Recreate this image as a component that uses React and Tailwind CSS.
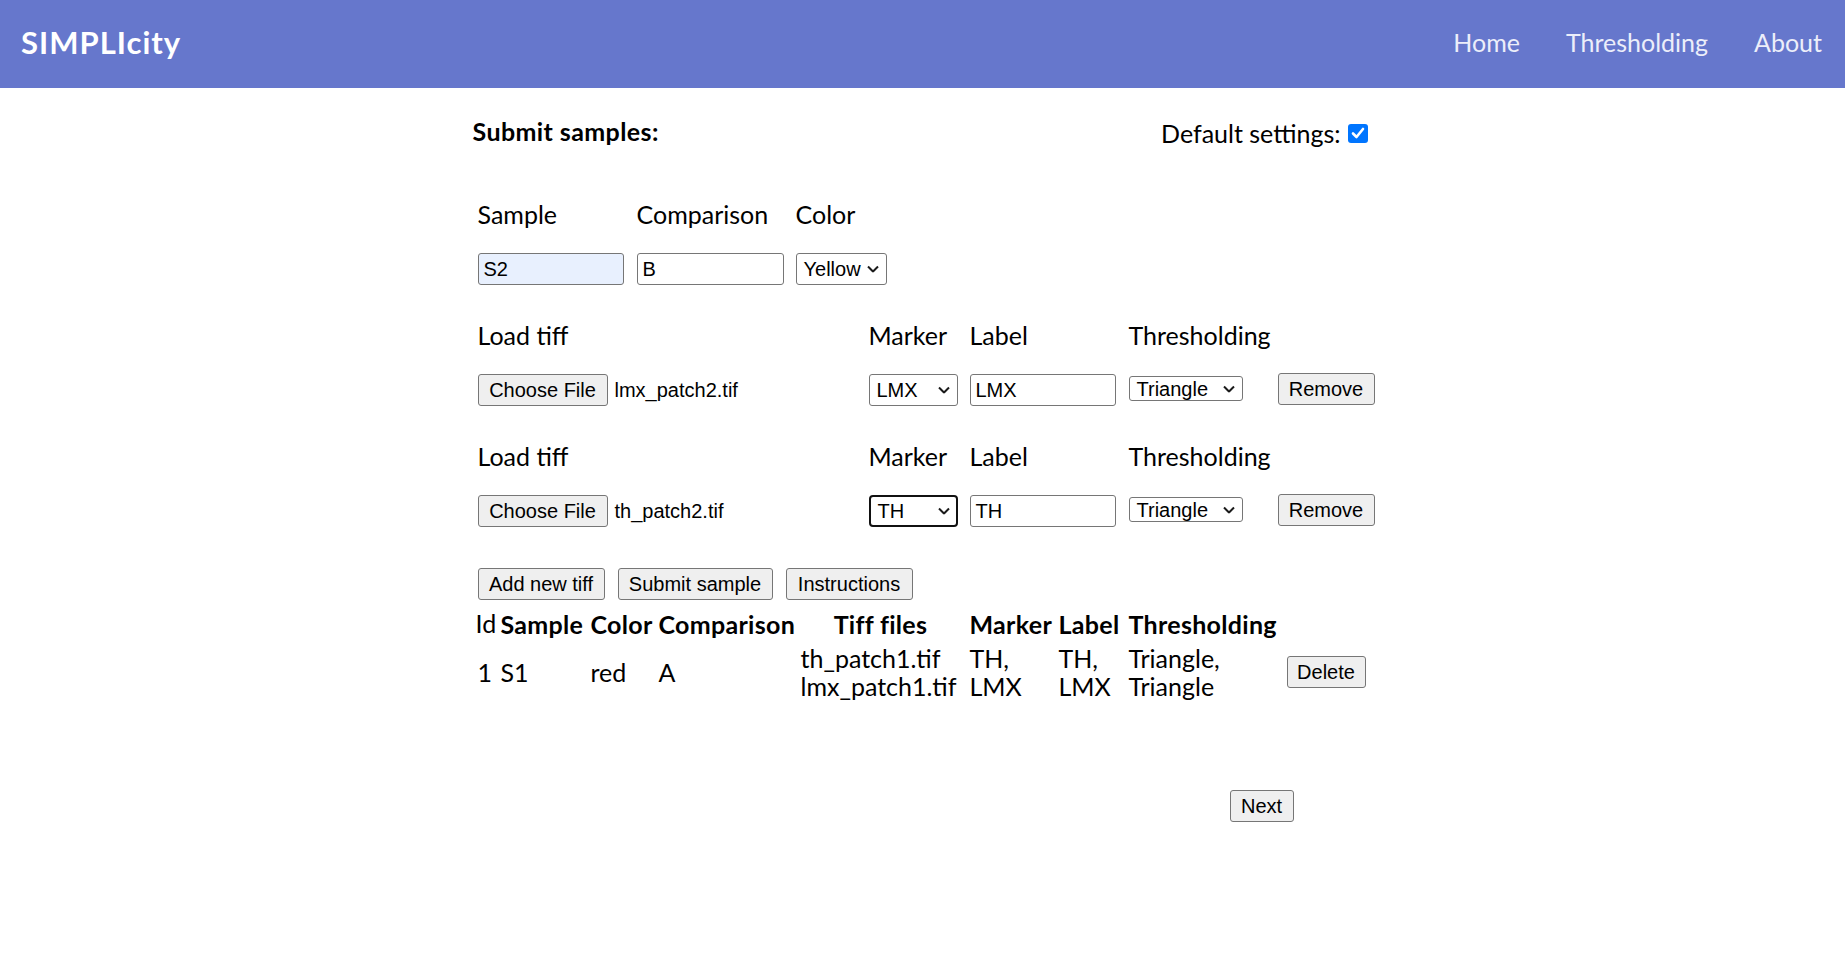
import React from "react";

const ctl = "font-['Liberation_Sans',Arial,sans-serif] text-[20px] text-black";

function Btn({ w, children, block }) {
  return (
    <button
      className={`${ctl} ${block ? "block" : ""} h-[32px] ${w} shrink-0 bg-[#efefef] border-[1.5px] border-[#767676] rounded-[3px] leading-none text-center`}
    >
      {children}
    </button>
  );
}

function Chevron() {
  return (
    <svg width="12" height="7" viewBox="0 0 12 7" className="absolute right-[8px] top-1/2 -translate-y-1/2 pointer-events-none">
      <polyline points="1,1 6,6 11,1" fill="none" stroke="#1a1a1a" strokeWidth="2" />
    </svg>
  );
}

function Select({ w, h = "h-[32px]", value, focused, extra = "" }) {
  return (
    <div className={`relative ${w} ${h} ${extra}`}>
      <div
        className={`${ctl} w-full h-full bg-white flex items-center pl-[7px] leading-none ${
          focused ? "border-[2.5px] border-[#111] rounded-[4px] pl-[6px]" : "border-[1.5px] border-[#767676] rounded-[3px]"
        }`}
      >
        {value}
      </div>
      <Chevron />
    </div>
  );
}

function TextInput({ w, value, bg = "bg-white" }) {
  return (
    <div
      className={`${ctl} ${w} h-[32px] ${bg} border-[1.5px] border-[#767676] rounded-[3px] flex items-center pl-[5px] leading-none`}
    >
      {value}
    </div>
  );
}

const lbl = "text-[25px] leading-[28px]";

function TiffRow({ file, marker, label, focused }) {
  return (
    <div className="grid grid-cols-[391px_101px_159px_149px_97px] gap-y-[25px] items-start pl-[5px] mt-[36px]">
      <div className={lbl}>Load tiff</div>
      <div className={lbl}>Marker</div>
      <div className={lbl}>Label</div>
      <div className={lbl}>Thresholding</div>
      <div />
      <div className="flex items-center h-[32px]">
        <Btn w="w-[130px]">Choose File</Btn>
        <span className={`${ctl} ml-[7px]`}>{file}</span>
      </div>
      <Select w="w-[89px]" value={marker} focused={focused} />
      <TextInput w="w-[146px]" value={label} />
      <Select w="w-[114px]" h="h-[25px]" value="Triangle" extra="mt-[2px]" />
      <div className="-mt-[1px]">
        <Btn w="w-[97px]" block>Remove</Btn>
      </div>
    </div>
  );
}

export default function App() {
  return (
    <div className="min-h-[978px] bg-white text-black font-['Lato',sans-serif]">
      <header className="h-[88px] bg-[#6677cc] flex justify-between items-start pl-[21px] pr-[23px]">
        <div className="mt-[24px] text-[31px] leading-[36px] font-bold tracking-[1px] text-white">SIMPLIcity</div>
        <nav className="mt-[28px] flex gap-[46px] text-[25px] leading-[28px] text-[#eceefa]">
          <span>Home</span>
          <span>Thresholding</span>
          <span>About</span>
        </nav>
      </header>

      <main className="w-[900px] mx-auto pt-[29px]">
        <div className="flex justify-between items-start">
          <div className="text-[25px] leading-[28px] font-bold tracking-[0.4px]">Submit samples:</div>
          <div className="flex items-center mt-[2px] mr-[5px]">
            <span className={lbl}>Default settings:</span>
            <div className="ml-[7px] w-[20px] h-[19px] rounded-[3px] bg-[#0075ff] flex items-center justify-center">
              <svg width="14" height="12" viewBox="0 0 14 12">
                <polyline points="2,6.5 5.5,10 12,2" fill="none" stroke="white" strokeWidth="2.6" strokeLinecap="round" strokeLinejoin="round" />
              </svg>
            </div>
          </div>
        </div>

        <div className="grid grid-cols-[159px_159px_91px] gap-y-[25px] items-start pl-[5px] mt-[53px]">
          <div className={lbl}>Sample</div>
          <div className={lbl}>Comparison</div>
          <div className={lbl}>Color</div>
          <TextInput w="w-[146px]" value="S2" bg="bg-[#e8f0fe]" />
          <TextInput w="w-[147px]" value="B" />
          <Select w="w-[91px]" value="Yellow" />
        </div>

        <TiffRow file="lmx_patch2.tif" marker="LMX" label="LMX" />
        <TiffRow file="th_patch2.tif" marker="TH" label="TH" focused />

        <div className="flex gap-[13px] pl-[5px] mt-[41px]">
          <Btn w="w-[127px]">Add new tiff</Btn>
          <Btn w="w-[155px]">Submit sample</Btn>
          <Btn w="w-[127px]">Instructions</Btn>
        </div>

        <table className="table-fixed border-collapse w-[893px] ml-[3px] mt-[10px] text-[25px]">
          <colgroup>
            <col className="w-[25px]" />
            <col className="w-[90px]" />
            <col className="w-[68px]" />
            <col className="w-[142px]" />
            <col className="w-[169px]" />
            <col className="w-[89px]" />
            <col className="w-[70px]" />
            <col className="w-[158px]" />
            <col className="w-[82px]" />
          </colgroup>
          <thead>
            <tr className="leading-[28px] align-top">
              <th className="p-0 text-left font-normal -translate-y-[1px]">Id</th>
              <th className="p-0 text-left font-bold tracking-[0.3px]">Sample</th>
              <th className="p-0 text-left font-bold tracking-[0.3px]">Color</th>
              <th className="p-0 text-left font-bold tracking-[0.3px]">Comparison</th>
              <th className="p-0 text-left font-bold tracking-[0.3px]">
                <div className="w-[160px] text-center">Tiff files</div>
              </th>
              <th className="p-0 text-left font-bold tracking-[0.3px]">Marker</th>
              <th className="p-0 text-left font-bold tracking-[0.3px]">Label</th>
              <th className="p-0 text-left font-bold tracking-[0.3px] whitespace-nowrap">Thresholding</th>
              <th className="p-0" />
            </tr>
          </thead>
          <tbody>
            <tr className="align-top">
              <td className="p-0 pt-[20px] leading-[28px] pl-[2px]">1</td>
              <td className="p-0 pt-[20px] leading-[28px]">S1</td>
              <td className="p-0 pt-[20px] leading-[28px]">red</td>
              <td className="p-0 pt-[20px] leading-[28px]">A</td>
              <td className="p-0 pt-[6px] leading-[28px] whitespace-nowrap">
                th_patch1.tif
                <br />
                lmx_patch1.tif
              </td>
              <td className="p-0 pt-[6px] leading-[28px]">
                TH,
                <br />
                LMX
              </td>
              <td className="p-0 pt-[6px] leading-[28px]">
                TH,
                <br />
                LMX
              </td>
              <td className="p-0 pt-[6px] leading-[28px]">
                Triangle,
                <br />
                Triangle
              </td>
              <td className="p-0 pt-[18px]">
                <Btn w="w-[79px]" block>Delete</Btn>
              </td>
            </tr>
          </tbody>
        </table>

        <div className="mt-[90px] ml-[757px]">
          <Btn w="w-[64px]" block>Next</Btn>
        </div>
      </main>
    </div>
  );
}
